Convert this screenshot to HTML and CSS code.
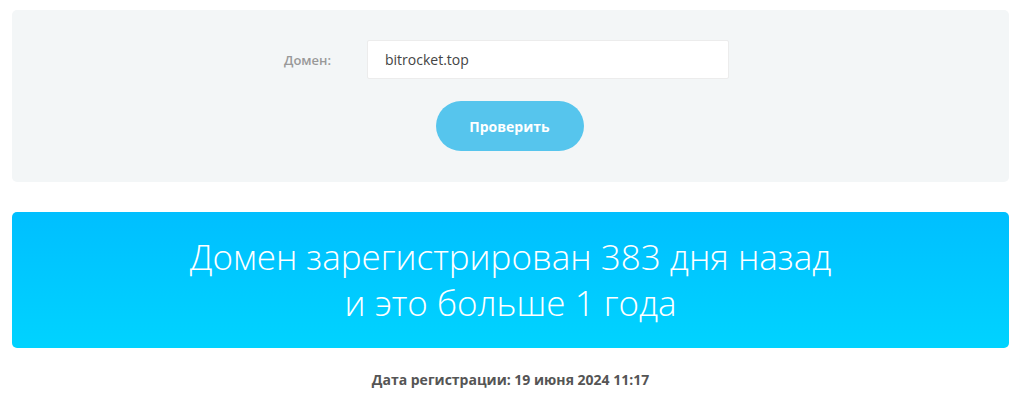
FILE: index.html
```html
<!DOCTYPE html>
<html lang="ru">
<head>
  <meta charset="UTF-8">
  <title>Проверка возраста домена</title>
  <link rel="stylesheet" href="styles.css">
</head>
<body>
  <div class="check-box">
    <div class="form-row">
      <label for="domain">Домен:</label>
      <input type="text" id="domain" value="bitrocket.top">
    </div>
    <div class="form-actions">
      <button>Проверить</button>
    </div>
  </div>

  <div class="result-box">
    Домен зарегистрирован 383 дня назад<br>
    и это больше 1 года
  </div>

  <div class="reg-date">Дата регистрации: 19 июня 2024 11:17</div>
</body>
</html>
```

FILE: styles.css
```css
body {
  margin: 10px 12px;
  background: #fff;
  font-family: 'Open Sans', sans-serif;
}

.check-box {
  background: #f3f6f7;
  border-radius: 5px;
  padding: 30px 0 31px;
}

.form-row {
  display: flex;
  justify-content: center;
  align-items: center;
  margin-left: -8px;
}

.form-row label {
  width: 83px;
  text-align: left;
  font-size: 13px;
  font-weight: 600;
  color: #999;
}

.form-row input {
  width: 362px;
  height: 39px;
  box-sizing: border-box;
  border: 1px solid #ececec;
  border-radius: 2px;
  background: #fff;
  padding: 0 17px;
  font-family: inherit;
  font-size: 14px;
  color: #444;
  outline: none;
}

.form-actions {
  text-align: center;
  margin-top: 22px;
  margin-right: 2px;
}

button {
  width: 148px;
  height: 50px;
  border: none;
  border-radius: 25px;
  background: #56c5ed;
  color: #fff;
  font-family: inherit;
  font-size: 14px;
  font-weight: 700;
  cursor: pointer;
}

.result-box {
  margin-top: 30px;
  height: 136px;
  box-sizing: border-box;
  padding-top: 22px;
  border-radius: 5px;
  background: linear-gradient(to bottom, #00bfff, #00d3ff);
  color: #fff;
  text-align: center;
  font-size: 35px;
  font-weight: 300;
  line-height: 46px;
}

.reg-date {
  margin-top: 22px;
  text-align: center;
  font-size: 14px;
  font-weight: 700;
  color: #555;
}
```
